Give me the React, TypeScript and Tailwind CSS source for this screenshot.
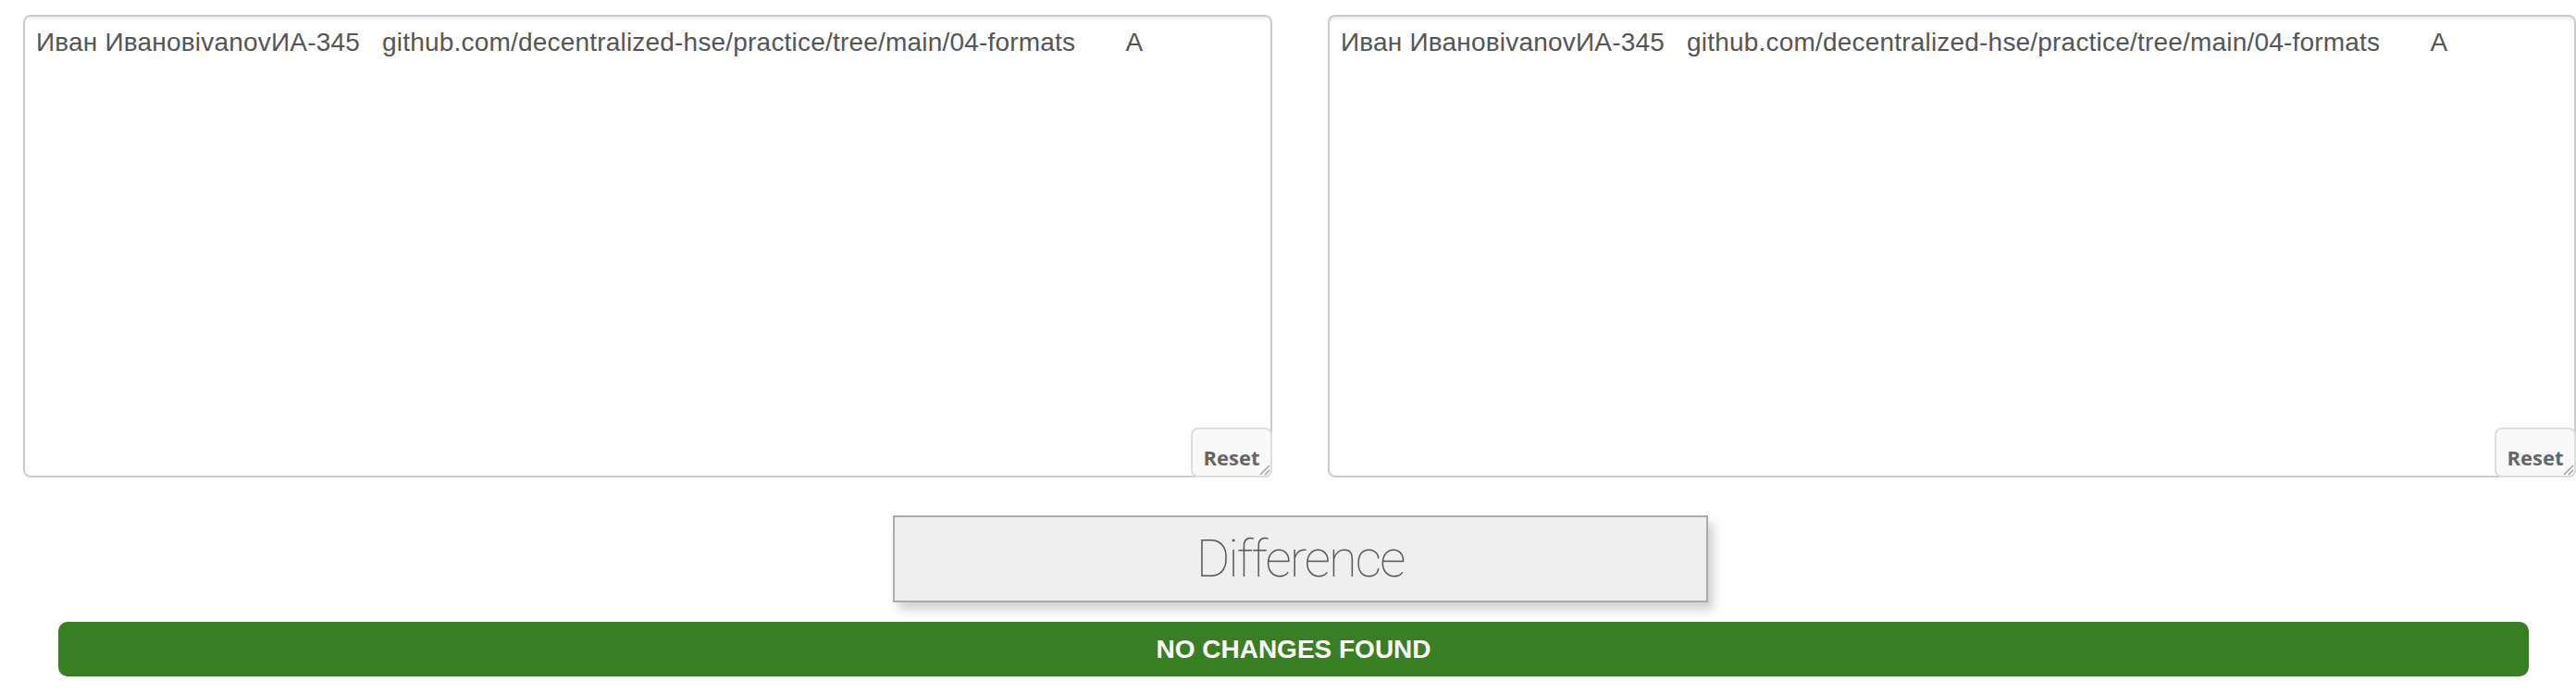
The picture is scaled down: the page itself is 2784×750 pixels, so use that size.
import React from 'react';

const ROW = 'Иван ИвановivanovИА-345   github.com/decentralized-hse/practice/tree/main/04-formats       A';

function Grip() {
    return (
        <svg className="absolute right-[2px] bottom-[2px] pointer-events-none" width="14" height="14" viewBox="0 0 14 14">
            <line x1="13" y1="3" x2="3" y2="13" stroke="#9a9a9a" strokeWidth="1.3" />
            <line x1="13" y1="8" x2="8" y2="13" stroke="#9a9a9a" strokeWidth="1.3" />
        </svg>
    );
}

function Pane({ width }: { width: string }) {
    return (
        <div className={`relative shrink-0 ${width}`}>
            <textarea
                defaultValue={ROW}
                spellCheck={false}
                className="block w-full h-[500px] resize-none border-2 border-[#cccccc] rounded-[8px] bg-white px-[12px] pt-[8px] text-[28px] leading-[40px] tracking-[0.2px] text-[#555555] outline-none shadow-[inset_0_2px_2px_rgba(0,0,0,0.075)]"
            />
            {/* Reset sits over the bottom right corner */}
            <button className="absolute right-0 bottom-0 w-[88px] h-[54px] pt-[10px] bg-[#f9f9f9] border-2 border-[#dddddd] rounded-[8px] text-[22px] font-bold text-[#666666] font-['Open_Sans',sans-serif]">
                Reset
            </button>
            <Grip />
        </div>
    );
}

export default function App() {
    return (
        <div className="w-[2784px] h-[750px] overflow-hidden bg-white font-['Liberation_Sans',Arial,sans-serif]">
            {/* Text panes */}
            <div className="flex gap-[60px] pl-[25px] pt-[16px]">
                <Pane width="w-[1350px]" />
                <Pane width="w-[1349px]" />
            </div>

            {/* Difference button */}
            <div className="flex justify-center ml-[25px] w-[2760px] mt-[41px]">
                <button className="w-[881px] h-[94px] bg-[#efefef] border-2 border-[#aaaaaa] shadow-[6px_8px_10px_rgba(0,0,0,0.18)] text-[56px] font-thin text-[#555555] font-['Roboto',sans-serif] tracking-[-2px]">
                    Difference
                </button>
            </div>

            {/* Result bar */}
            <div className="mt-[21px] ml-[63px] w-[2670px] h-[59px] rounded-[10px] bg-[#387e23] flex items-center justify-center">
                <span className="text-[28px] font-bold text-white uppercase">No changes found</span>
            </div>
        </div>
    );
}
